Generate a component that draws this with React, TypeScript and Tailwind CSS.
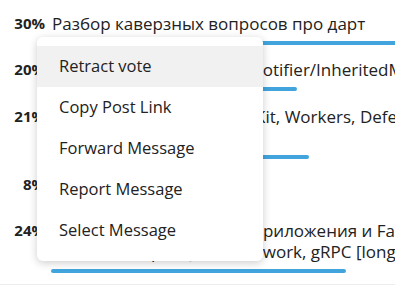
import React from "react";

const BAR = "bg-[#41a4dc]";

const rows = [
  { pct: "30%", lines: ["Разбор каверзных вопросов про дарт"], w: 369, gap: "" },
  { pct: "20%", lines: ["State менеджер, ChangeNotifier/InheritedModel"], w: 246, gap: "mt-[14px]" },
  { pct: "21%", lines: ["Платформы и dart FFI: UIKit, Workers, Deferred", "components и Wasm"], w: 258, gap: "mt-[15px]" },
  { pct: "8%", lines: ["Тестирование и CI/CD"], w: 98, gap: "mt-[15px]" },
  {
    pct: "24%",
    lines: ["Серверный Dart бэкенд приложения и FaaS,", "Shelf, Serverpod, Jet framework, gRPC [long]"],
    w: 295,
    gap: "mt-[14px]",
  },
];

const menu = ["Retract vote", "Copy Post Link", "Forward Message", "Report Message", "Select Message"];

export default function App() {
  return (
    <div
      className="relative w-[395px] h-[288px] overflow-hidden bg-white text-[#222]"
      style={{ fontFamily: '"Open Sans", "Noto Sans", sans-serif' }}
    >
      <div className="w-[440px] pt-[13px] pb-[11px] border-b border-[#ececec]">
        {rows.map((r, i) => (
          <div key={i} className={"flex " + r.gap}>
            <div className="w-[45px] shrink-0 text-right text-[15px] leading-[21px] font-bold">{r.pct}</div>
            <div className="pl-[6px] flex-1">
              {r.lines.map((l, j) => (
                <div key={j} className="whitespace-nowrap text-[17px] leading-[21px] pl-[1px]">
                  {l}
                </div>
              ))}
              <div className={"mt-[7px] h-[4px] rounded-full " + BAR} style={{ width: r.w }} />
            </div>
          </div>
        ))}
      </div>

      <div className="absolute left-[37px] top-[37px] w-[226px] rounded-[6px] bg-white pt-[9px] pb-[10px] shadow-[0_2px_8px_rgba(0,0,0,0.2)]">
        {menu.map((m, i) => (
          <div
            key={m}
            className={"h-[41px] flex items-center px-[22px] text-[16.5px] text-[#222] " + (i === 0 ? "bg-[#f1f1f1]" : "")}
          >
            {m}
          </div>
        ))}
      </div>
    </div>
  );
}
